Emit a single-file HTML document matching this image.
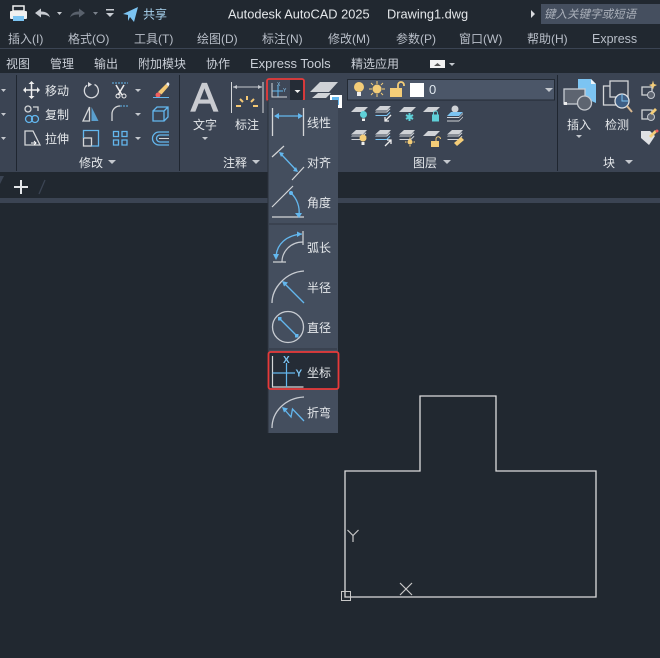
<!DOCTYPE html>
<html>
<head>
<meta charset="utf-8">
<style>
html,body{margin:0;padding:0;background:#212830;width:660px;height:658px;overflow:hidden}
svg{display:block}
text{font-family:"Liberation Sans","Noto Sans CJK SC",sans-serif;font-size:12px;fill:#c9ced6}
.w{fill:#e4e7ea}
.m{fill:#b9bfc9}
.l{stroke:#d4d6d8;fill:none;stroke-width:1.3}
.b{stroke:#63b7ee;fill:none;stroke-width:1.3}
.tri{fill:#c4c8ce}
.t{fill:#e4e7ea;font-size:12.800px}
</style>
</head>
<body>
<svg width="660" height="658" viewBox="0 0 660 658" xmlns="http://www.w3.org/2000/svg">
<defs>
<path id="plate" d="M5 0h12l-5 5H0z" fill="#cfd2d6"/>
<g id="stack">
<path d="M5 0h11l-4 4.500H0z" fill="#cfd2d6"/>
<path d="M1 5.500h10.500l3-3 1 .5-3.500 3.500H0z" fill="#cfd2d6"/>
<path d="M1 9h10.500l3-3 1 .5-3.500 3.500H0z" fill="#cfd2d6"/>
</g>
<g id="stackb">
<path d="M5 0h11l-4 4.500H0z" fill="#cfd2d6"/>
<path d="M1 5.500h10.500l3-3 1 .5-3.500 3.500H0z" fill="#cfd2d6"/>
<path d="M1 9h10.500l3-3 1 .5-3.500 3.500H0z" fill="#7cc4f2"/>
</g>
</defs>
<!-- backgrounds -->
<rect width="660" height="658" fill="#212830"/>
<rect x="0" y="48" width="660" height="1" fill="#3b4453"/>
<rect x="0" y="73" width="660" height="99" fill="#3b4453"/>
<rect x="0" y="198" width="660" height="5" fill="#3b4453"/>
<rect x="16" y="75" width="1" height="96" fill="#1f2630"/>
<rect x="179" y="75" width="1" height="96" fill="#1f2630"/>
<rect x="557" y="75" width="1" height="96" fill="#1f2630"/>

<!-- title bar -->
<g>
<rect x="13" y="6" width="11" height="5" fill="none" stroke="#f0f0f0" stroke-width="1.500"/>
<rect x="10" y="11" width="17" height="8" rx="1" fill="#f0f0f0"/>
<rect x="13" y="16" width="11" height="5" fill="#7cc4f2"/>
<path d="M35 13l6-4.500v3c5 0 8 2 9 6-2-2.500-5-3-9-3v3z" fill="#c8ccd2"/>
<path d="M57 12h5l-2.500 3z" class="tri"/>
<path d="M85 13l-6-4.500v3c-5 0-8 2-9 6 2-2.500 5-3 9-3v3z" fill="#59616c"/>
<path d="M93 12h5l-2.500 3z" fill="#7b828c"/>
<rect x="106" y="9" width="8" height="1.500" fill="#c8ccd2"/>
<path d="M106 13h8l-4 4z" fill="#c8ccd2"/>
<path d="M123 14l15-7-4 15-4-5-2 4v-6z" fill="#7cc4f2"/>
<text x="143" y="18.500" style="fill:#a8d2ee">共享</text>
<text x="228" y="18.500" class="t">Autodesk AutoCAD 2025</text>
<text x="387" y="18.500" class="t">Drawing1.dwg</text>
<path d="M531 10l4 4-4 4z" fill="#d8dade"/>
<rect x="541" y="4" width="119" height="20" fill="#454f5f"/>
<text x="544" y="18" style="font-size:11.500px;font-style:italic;fill:#aab0ba">键入关键字或短语</text>
</g>

<!-- menu -->
<text x="8" y="43" class="m">插入(I)</text>
<text x="68" y="43" class="m">格式(O)</text>
<text x="134" y="43" class="m">工具(T)</text>
<text x="197" y="43" class="m">绘图(D)</text>
<text x="262" y="43" class="m">标注(N)</text>
<text x="328" y="43" class="m">修改(M)</text>
<text x="396" y="43" class="m">参数(P)</text>
<text x="459" y="43" class="m">窗口(W)</text>
<text x="527" y="43" class="m">帮助(H)</text>
<text x="592" y="43" class="m" style="font-size:12.500px">Express</text>

<!-- tabs -->
<text x="6" y="68">视图</text>
<text x="50" y="68">管理</text>
<text x="94" y="68">输出</text>
<text x="138" y="68">附加模块</text>
<text x="206" y="68">协作</text>
<text x="250" y="68" style="font-size:13px">Express Tools</text>
<text x="351" y="68">精选应用</text>
<rect x="430" y="60" width="15" height="8" fill="#f2f2f2"/>
<path d="M434 66h7l-3.500-3z" fill="#555"/>
<path d="M449 63h6l-3 3z" class="tri"/>

<!-- left arrows -->
<path d="M1 89h5l-2.500 3zM1 113h5l-2.500 3zM1 137h5l-2.500 3z" class="tri"/>

<!-- modify panel row1 -->
<g>
<path d="M31.500 83v14M24.500 90h14" stroke="#eee" stroke-width="1.500"/>
<path d="M31.500 81l-3 3h6zM31.500 99l-3-3h6zM23 90l3-3v6zM40 90l-3-3v6z" fill="#eee"/>
<text x="45" y="95" class="w">移动</text>
<path d="M94.500 84.500a7 7 0 1 1-7.500 .8" fill="none" stroke="#d8dade" stroke-width="1.300"/>
<path d="M88 82l4 2.500-4 2.500z" fill="#d8dade"/>
<path d="M112 83h16" stroke="#63b7ee" stroke-width="1" stroke-dasharray="2 1"/>
<path d="M116 85l6 10M124 85l-6 10" stroke="#eee" stroke-width="1.500"/>
<circle cx="118" cy="96" r="2" fill="none" stroke="#eee"/><circle cx="124" cy="96" r="2" fill="none" stroke="#eee"/>
<path d="M135 89h6l-3 3z" class="tri"/>
<path d="M158 92l8-8 2.500 2.500-7 8z" fill="#f4c874"/>
<path d="M166 84l2-2 1.500 2-1 2.500z" fill="#f0f0f0"/>
<circle cx="158" cy="95" r="2.500" fill="#f06060"/>
<path d="M153 97.500h16" stroke="#63b7ee"/>
</g>
<!-- row2 -->
<g>
<circle cx="28" cy="109" r="3" class="l"/>
<path d="M33 107h5v4" class="l"/>
<circle cx="29" cy="119" r="3.500" class="b"/><circle cx="35" cy="119" r="3.500" class="b"/>
<text x="45" y="119" class="w">复制</text>
<path d="M89.500 107v14h-6.500z" class="l"/>
<path d="M91.500 107v14h7z" fill="#63b7ee" opacity=".8"/>
<path d="M112 121v-7a8 8 0 0 1 8-8" class="l"/>
<path d="M120 106h8" stroke="#63b7ee" stroke-dasharray="2 1"/>
<path d="M135 113h6l-3 3z" class="tri"/>
<path d="M153 111h11v10h-11zM153 111l4-4h11l0 10-4 4M164 111l4-4" class="b"/>
</g>
<!-- row3 -->
<g>
<path d="M25 131h8l7 14H25z" class="l"/>
<path d="M31 143h5m-2-2l2 2-2 2" stroke="#fff" fill="none"/>
<text x="45" y="143" class="w">拉伸</text>
<rect x="83.500" y="138" width="8" height="8" class="l"/>
<path d="M83.500 138v-7.500h15v15.500h-7" class="b"/>
<path d="M113.500 131.500h5v5h-5zM122 131.500h5v5h-5zM113.500 140h5v5h-5zM122 140h5v5h-5z" class="b"/>
<path d="M135 137h6l-3 3z" class="tri"/>
<path d="M169 132h-10a6 6 0 0 0 0 13h10M169 135h-9a3 3 0 0 0 0 7h9" class="b"/>
<path d="M159 138.500h10" stroke="#d4d6d8"/>
</g>
<text x="79" y="167" class="w">修改</text>
<path d="M108 160h8l-4 4z" class="tri"/>

<!-- annotation panel -->
<text x="191" y="111" style="font-size:40px;fill:#c9cbd0;stroke:#c9cbd0;stroke-width:1.200">A</text>
<text x="193" y="129" class="w">文字</text>
<path d="M202 137h6l-3 3z" class="tri"/>
<path d="M231.500 82v31M263 82v31" stroke="#d4d6d8" stroke-width="1"/>
<path d="M233 87h29" stroke="#c4c8ce"/>
<path d="M233 87l4-2v4zM262 87l-4-2v4z" fill="#c4c8ce"/>
<path d="M247 96v4M240 99l3 3M254 99l-3 3M236 106h5M253 106h5" stroke="#f4c874" stroke-width="2"/>
<text x="235" y="129" class="w">标注</text>
<text x="223" y="167" class="w">注释</text>
<path d="M252 160h8l-4 4z" class="tri"/>

<!-- coordinate button -->
<rect x="267" y="80" width="37" height="21" fill="#3e4757"/>
<rect x="290" y="80" width="14" height="21" fill="#252c36"/>
<path d="M272 91h11M278 85v12" stroke="#63b7ee" fill="none"/>
<path d="M272 83v14h15" stroke="#d4d6d8" fill="none"/>
<text x="277" y="86" style="font-size:5px;fill:#8cc8f0">X</text>
<text x="283" y="92" style="font-size:5px;fill:#8cc8f0">Y</text>
<path d="M294.500 90h6l-3 3z" fill="#eee"/>
<rect x="267" y="79" width="37" height="22" rx="2" fill="none" stroke="#e83a3a" stroke-width="1.800"/>

<!-- layer stack icon -->
<path d="M320 82h18l-9 10h-19z" fill="#cfd2d6"/>
<path d="M318 93h13l-5 5h-14z" fill="#cfd2d6"/>
<rect x="330" y="95" width="12" height="13" fill="#fff"/>
<rect x="332" y="97" width="7" height="8" fill="#63b7ee"/>

<!-- layer combo -->
<rect x="347.500" y="79.500" width="207" height="20.500" fill="#4b5668" stroke="#232a34"/>
<circle cx="359" cy="87" r="5" fill="#f4cd78"/><rect x="357" y="92" width="4" height="4" fill="#eee"/>
<circle cx="377" cy="89" r="4.500" fill="#f4cd78"/>
<path d="M377 81v3M377 94v3M369 89h3M382 89h3M371 83l2 2M383 83l-2 2M371 95l2-2M383 95l-2-2" stroke="#f4cd78"/>
<rect x="390" y="88" width="12" height="9" fill="#f4cd78"/>
<path d="M398 88v-3a3 3 0 0 1 6 0v1" fill="none" stroke="#f4cd78" stroke-width="1.800"/>
<rect x="410" y="83" width="14" height="14" fill="#fff"/>
<text x="429" y="94" style="font-size:13px;fill:#dfe7ee">0</text>
<path d="M545 88h8l-4 4z" fill="#c4c8ce"/>

<!-- layer icons row1 -->
<use href="#plate" x="351" y="107"/>
<circle cx="363.500" cy="114.500" r="3.500" fill="#5fd0d8"/><rect x="362" y="118.500" width="3" height="2.500" fill="#eee"/>
<use href="#stackb" x="375" y="106"/>
<path d="M391 115l-6 6m0-4v4h4" stroke="#eee" fill="none" stroke-width="1.300"/>
<use href="#plate" x="399" y="107"/>
<path d="M409.500 113v8M406 115l7 4M413 115l-7 4" stroke="#5fd0d8" stroke-width="2"/>
<use href="#plate" x="423" y="107"/>
<rect x="432" y="114.500" width="7" height="7" fill="#5fd0d8"/><path d="M433.500 114.500v-1.500a2 2 0 0 1 4 0v1.500" stroke="#5fd0d8" fill="none"/>
<circle cx="455" cy="109" r="3.500" fill="#cfd2d6"/>
<path d="M451 112h12l-4 4h-12z" fill="#7cc4f2"/>
<path d="M447 117h12l4-4v1l-4 4h-12zM447 120.500h12l4-4v1l-4 4h-12z" fill="#cfd2d6"/>
<!-- layer icons row2 -->
<use href="#stack" x="351" y="130"/>
<circle cx="363" cy="138" r="3.500" fill="#f4cd78"/><rect x="361.500" y="142" width="3" height="3" fill="#eee"/>
<use href="#stackb" x="375" y="130"/>
<path d="M385 146l6-6m0 4v-4h-4" stroke="#eee" fill="none" stroke-width="1.300"/>
<use href="#stack" x="399" y="130"/>
<circle cx="410" cy="142" r="2.500" fill="#f4cd78"/><path d="M410 137.500v1.500M410 145v1.500M405 142h1.500M413.500 142h1.500" stroke="#f4cd78"/>
<use href="#plate" x="423" y="131"/>
<rect x="431" y="141" width="8" height="6" fill="#f4cd78"/><path d="M436 141v-2a2.200 2.200 0 0 1 4.500 0" stroke="#f4cd78" fill="none"/>
<use href="#stack" x="447" y="130"/>
<path d="M454 143l7-6 3 3-7 6z" fill="#f4cd78"/>
<text x="413" y="167" class="w">图层</text>
<path d="M443 160h8l-4 4z" class="tri"/>

<!-- insert / block -->
<path d="M578 79h13l5 5v19l-18-8z" fill="#7cc4f2"/>
<path d="M591 79l5 5h-5z" fill="#eef4f8"/>
<rect x="564" y="89" width="21" height="15" fill="#5d6470" stroke="#c8ccd2" stroke-width="1.300"/>
<circle cx="584.500" cy="103" r="7" fill="#5d6470" stroke="#c4c8ce" stroke-width="1.300"/>
<rect x="564" y="102" width="3" height="3" fill="#eee"/>
<text x="567" y="129" class="w">插入</text>
<path d="M576 135h6l-3 3z" class="tri"/>
<rect x="603.500" y="86" width="16" height="19" fill="none" stroke="#d4d6d8" stroke-width="1.300"/>
<rect x="610" y="81" width="18" height="16" fill="#3b4453" stroke="#d4d6d8" stroke-width="1.300"/>
<circle cx="622" cy="101" r="7" fill="#3f5f85" stroke="#e0e2e4" stroke-width="1.300"/>
<path d="M622 94v7h6" stroke="#7cc4f2" fill="none"/>
<path d="M627 106l5 6" stroke="#d8b890" stroke-width="2"/>
<text x="605" y="129" class="w">检测</text>
<text x="603" y="167" class="w">块</text>
<path d="M625 160h8l-4 4z" class="tri"/>
<!-- right small icons -->
<path d="M642 87h10v8h-10z" class="l"/><circle cx="651" cy="95" r="3.500" fill="#5d6470" stroke="#c4c8ce"/>
<path d="M652 86.500l-3-1.500 3-1 1-3.500 1 3.500 3 1-3 1.500-1 3z" fill="#f4cd78"/>
<path d="M642 110h10v9h-10z" class="l"/><circle cx="651" cy="117" r="3.500" fill="#5d6470" stroke="#c4c8ce"/><path d="M650 113l5-5 2 2-5 5z" fill="#f4cd78"/>
<path d="M641 131h9l5 5-6 9-8-7z" fill="#dfe1e4"/><path d="M649 136l6-6 2 2-6 6z" fill="#f4cd78"/><circle cx="657" cy="131" r="1.500" fill="#f06060"/>

<!-- tab bar -->
<path d="M0 184l4-8h-4z" fill="#3b4453"/>
<path d="M21 180v14M14 187h14" stroke="#e4e7ea" stroke-width="2"/>
<path d="M39 194l6-14" stroke="#3b4453" stroke-width="1.300"/>

<!-- drawing -->
<path d="M345 597V471h75V396h76v75h100v126z" fill="none" stroke="#dcdcdc" stroke-width="1.300"/>
<rect x="341.500" y="591.500" width="9" height="9" fill="none" stroke="#c8c8c8" stroke-width="1"/>
<path d="M347.500 530l5.500 5.500 5.500-5.500M353 535.500v6.500" stroke="#c8c8c8" fill="none" stroke-width="1.200"/>
<path d="M400 583l12 12M412 583l-12 12" stroke="#c8c8c8" stroke-width="1.200"/>

<!-- dropdown -->
<rect x="268" y="100" width="70" height="333" fill="#444e5e"/>
<rect x="267.500" y="100" width="1" height="333" fill="#2a313b"/>

<!-- linear -->
<path d="M272.500 108v28M303.500 108v28" stroke="#d4d6d8" stroke-width="1.300"/>
<path d="M275 116h27" class="b"/>
<path d="M274 116l5-3v6zM303 116l-5-3v6z" fill="#63b7ee"/>
<text x="307" y="127" class="w">线性</text>
<!-- aligned -->
<path d="M272 157l12-11M292 180l12-13" stroke="#d4d6d8" stroke-width="1.200"/>
<path d="M281 154l16 17" class="b"/>
<path d="M279 152l5 1-3 4zM298 172l-5-1 3-4z" fill="#63b7ee"/>
<text x="307" y="167" class="w">对齐</text>
<!-- angular -->
<path d="M272 207l21-21M272 217h32" stroke="#d4d6d8" stroke-width="1.200"/>
<path d="M291 193a26 26 0 0 1 8 22" class="b"/>
<circle cx="291" cy="193" r="2" fill="#63b7ee"/>
<path d="M295 213h7l-3 5z" fill="#63b7ee"/>
<text x="307" y="207" class="w">角度</text>
<path d="M269 224h68" stroke="#2f3641" stroke-width="1"/>
<!-- arc -->
<path d="M303 231v14" stroke="#d4d6d8" stroke-width="1.200"/>
<path d="M276 258c0-14 11-23 26-24" class="b"/>
<path d="M302 234l-5-2.500v5.500zM276 260l-3-6h6z" fill="#63b7ee"/>
<path d="M282 262c0-10 8-20 21-20" stroke="#c8ccd2" fill="none" stroke-width="1.200"/>
<path d="M273 262h13" stroke="#d4d6d8" stroke-width="1.200"/>
<text x="307" y="252" class="w">弧长</text>
<!-- radius -->
<path d="M272 303c0-15 14-31 32-32" stroke="#c8ccd2" fill="none" stroke-width="1.300"/>
<path d="M284 283l20 20" class="b" stroke-width="1"/>
<path d="M282 281l6 1.500-4 4z" fill="#63b7ee"/>
<text x="307" y="292" class="w">半径</text>
<!-- diameter -->
<circle cx="288" cy="327" r="15.500" fill="none" stroke="#c8ccd2" stroke-width="1.300"/>
<path d="M280 319l16 16" class="b" stroke-width="1"/>
<rect x="278" y="317" width="3.500" height="3.500" fill="#63b7ee"/><rect x="295" y="334" width="3.500" height="3.500" fill="#63b7ee"/>
<text x="307" y="332" class="w">直径</text>
<path d="M269 349h68" stroke="#2f3641" stroke-width="1"/>
<!-- ordinate highlighted -->
<rect x="268" y="352" width="70" height="37" fill="#252c36"/>
<path d="M272.500 356v31h31" stroke="#d4d6d8" stroke-width="1.200" fill="none"/>
<path d="M272.500 373h22.500M286.500 363v24" stroke="#63b7ee" stroke-width="1.200" fill="none"/>
<text x="283" y="363" style="font-size:10px;font-weight:700;fill:#7cc4f2">X</text>
<text x="295.500" y="376.500" style="font-size:10px;font-weight:700;fill:#7cc4f2">Y</text>
<text x="307" y="377" class="w">坐标</text>
<rect x="268.500" y="352" width="70" height="37" rx="2" fill="none" stroke="#e83a3a" stroke-width="1.800"/>
<!-- jogged -->
<path d="M272 428c0-16 13-30 32-31" stroke="#c8ccd2" fill="none" stroke-width="1.300"/>
<path d="M284 409l7 8 1.500-8 11.500 12" class="b" stroke-width="1"/>
<path d="M282 407l6 1.500-4 4z" fill="#63b7ee"/>
<text x="307" y="417" class="w">折弯</text>
</svg>
</body>
</html>
